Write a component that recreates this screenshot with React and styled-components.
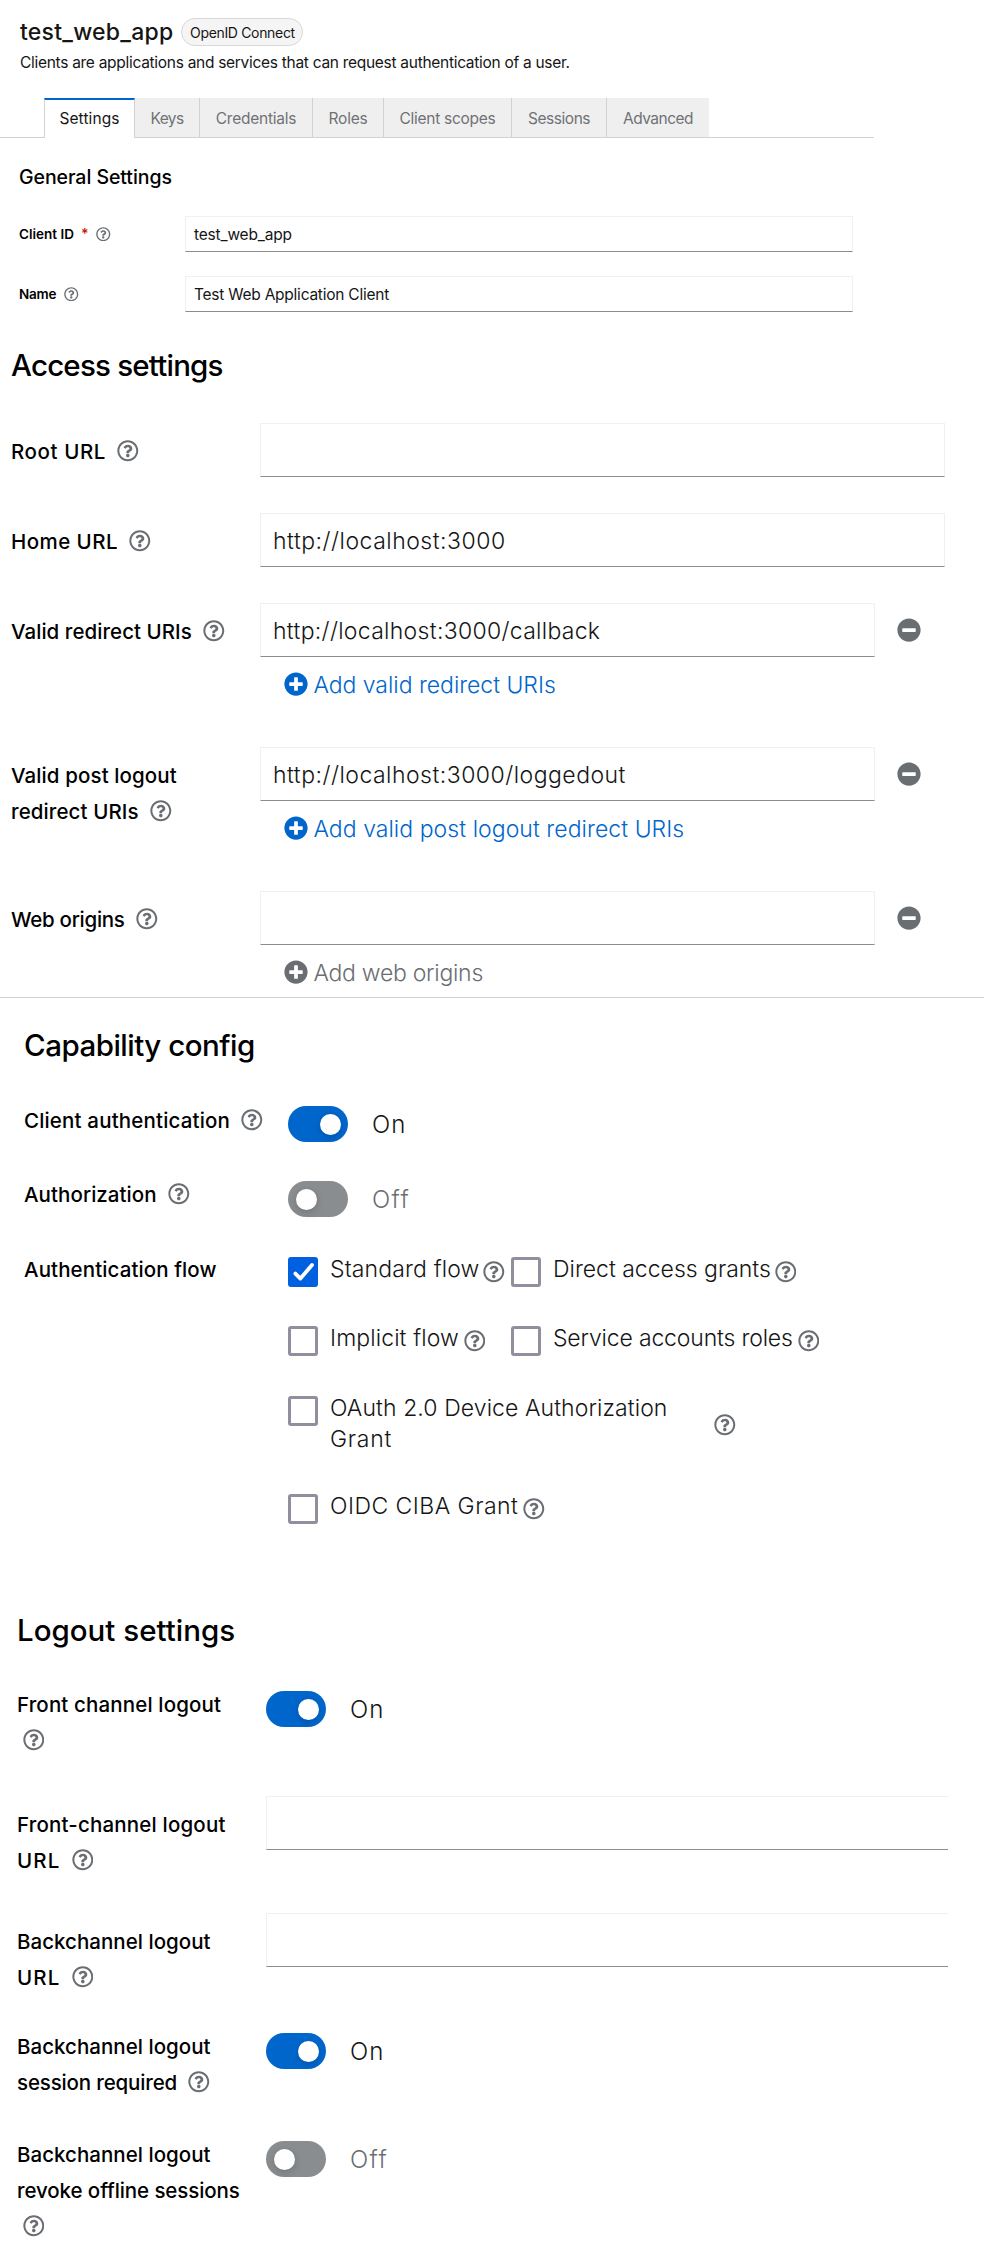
import React from "react";
import styled, { createGlobalStyle, css } from "styled-components";
import { FaRegQuestionCircle, FaPlusCircle, FaMinusCircle } from "react-icons/fa";

const GlobalStyle = createGlobalStyle`
  *, *::before, *::after { box-sizing: border-box; }
  body {
    margin: 0;
    background: #fff;
    color: #151515;
    font-family: Inter, "Liberation Sans", sans-serif;
  }
`;

const Page = styled.main`
  width: 984px;
  height: 2260px;
  overflow: hidden;
  background: #fff;
`;

/* Spacing is tuned per string through $ls */
const Txt = styled.span`
  letter-spacing: ${(p) => p.$ls || 0}px;
  white-space: nowrap;
`;

/* ---------- header ---------- */
const Header = styled.header`
  padding: 18px 20px 0;
`;
const TitleRow = styled.div`
  display: flex;
  align-items: center;
  gap: 8px;
  height: 28px;
`;
const Title = styled.h1`
  margin: 0;
  font-size: 23px;
  line-height: 28px;
  font-weight: 500;
`;
const Pill = styled.span`
  display: flex;
  align-items: center;
  justify-content: center;
  width: 122px;
  height: 28px;
  border: 1px solid #d8d8d8;
  border-radius: 14px;
  background: #f5f5f5;
  font-size: 14px;
`;
const Description = styled.p`
  margin: 5px 0 0;
  font-size: 15.5px;
  line-height: 24px;
`;

/* ---------- tabs ---------- */
const Tabs = styled.nav`
  display: flex;
  width: 874px;
  height: 40px;
  margin-top: 23px;
  padding-left: 44px;
  border-bottom: 1px solid #d2d2d2;
`;
const Tab = styled.div`
  display: flex;
  align-items: center;
  justify-content: center;
  width: ${(p) => p.$w}px;
  height: 39px;
  padding-top: 2px;
  border-right: 1px solid #d2d2d2;
  background: #efefef;
  color: #6f7276;
  font-size: 15.5px;
  &:last-child { border-right: 0; }
  ${(p) =>
    p.$active &&
    css`
      height: 40px;
      padding-top: 0;
      padding-bottom: 1px;
      border-left: 1px solid #d2d2d2;
      border-top: 2px solid #0066cc;
      background: #fff;
      color: #151515;
    `}
`;

/* ---------- form parts ---------- */
const Section = styled.section`
  padding-top: ${(p) => p.$top}px;
  padding-left: ${(p) => p.$left}px;
`;
const Heading = styled.h2`
  margin: 0 0 ${(p) => p.$gap}px;
  color: #000;
  font-weight: 500;
  font-size: 29.5px;
  line-height: 40px;
`;
const SmallHeading = styled(Heading)`
  font-size: 19.5px;
  line-height: 26px;
`;
const Row = styled.div`
  display: grid;
  grid-template-columns: ${(p) => p.$label}px 1fr;
  align-items: start;
  height: ${(p) => p.$h}px;
`;
const Label = styled.div`
  padding-top: ${(p) => p.$top || 0}px;
  margin-top: ${(p) => (p.$raised ? -1 : 0)}px;
  color: #000;
  font-size: ${(p) => (p.$small ? 13.5 : 20.5)}px;
  font-weight: ${(p) => (p.$small ? 600 : 500)};
`;
const LabelLine = styled.div`
  display: flex;
  align-items: center;
  height: 36px;
`;
const Help = styled(FaRegQuestionCircle)`
  flex: none;
  width: ${(p) => p.$size || 21.6}px;
  height: ${(p) => p.$size || 21.6}px;
  margin-left: ${(p) => p.$ml ?? 11.3}px;
  color: #6a6e73;
`;
const Required = styled.span`
  margin-left: 7px;
  color: #c9190b;
  font-size: 14px;
  line-height: 14px;
`;
const Field = styled.div`
  display: flex;
  align-items: center;
  width: ${(p) => p.$w}px;
  height: ${(p) => (p.$small ? 36 : 54)}px;
  padding-top: ${(p) => (p.$small ? 0 : 2)}px;
  padding-left: ${(p) => (p.$small ? 8 : 12)}px;
  border: 1px solid #f0f0f0;
  border-bottom-color: #8a8d90;
  ${(p) => p.$open && "border-right: 0;"}
  font-size: ${(p) => (p.$small ? 15.5 : 23)}px;
  font-weight: ${(p) => (p.$small ? 400 : 300)};
`;
const FieldLine = styled.div`
  display: flex;
  align-items: center;
  gap: 22px;
`;
const Remove = styled(FaMinusCircle)`
  width: 24px;
  height: 24px;
  color: #6a6e73;
`;
const AddLink = styled.div`
  display: flex;
  align-items: center;
  gap: 5.4px;
  height: 54px;
  padding-left: 24px;
  color: ${(p) => (p.$muted ? "#6a6e73" : "#0066cc")};
  font-size: 23px;
  font-weight: 300;
  svg { width: 24px; height: 24px; }
  span { padding-top: 2px; }
`;
const Divider = styled.hr`
  margin: 0;
  border: 0;
  border-top: 1px solid #d2d2d2;
`;

const SwitchRow = styled.div`
  display: flex;
  align-items: center;
  gap: 24px;
  height: 36px;
  margin-top: 4px;
  color: ${(p) => (p.$on ? "#151515" : "#6a6e73")};
  font-size: 24px;
  font-weight: 300;
`;
const Track = styled.span`
  display: flex;
  align-items: center;
  justify-content: ${(p) => (p.$on ? "flex-end" : "flex-start")};
  width: 60px;
  height: 36px;
  padding: 0 7px 0 8px;
  border-radius: 18px;
  background: ${(p) => (p.$on ? "#0066cc" : "#8a8d90")};
`;
const Knob = styled.span`
  width: 21px;
  height: 21px;
  border-radius: 50%;
  background: #fff;
  box-shadow: 0 4px 8px rgba(3, 3, 3, 0.12), 0 0 4px rgba(3, 3, 3, 0.06);
`;

/* ---------- flow checkboxes ---------- */
const FlowGrid = styled.div`
  display: grid;
  grid-template-columns: 223px 1fr;
  grid-template-rows: 69px 70px 98px 60px;
  padding-top: 1px;
`;
const FlowItem = styled.div`
  display: flex;
  align-items: flex-start;
  grid-column: ${(p) => (p.$wide ? "1 / -1" : "auto")};
  font-size: 23px;
  font-weight: 300;
  line-height: 31px;
`;
const FlowText = styled.div`
  margin-left: 12px;
  padding-top: 1px;
  width: ${(p) => (p.$w ? `${p.$w}px` : "auto")};
  white-space: nowrap;
`;
const FlowHelp = styled(Help)`
  margin-top: ${(p) => p.$mt || 8}px;
`;
const Box = styled.span`
  flex: none;
  display: block;
  width: 30px;
  height: 30px;
  margin-top: 4px;
  border: ${(p) => (p.$checked ? "0" : "3px solid #8f8f9d")};
  border-radius: 3px;
  background: ${(p) => (p.$checked ? "#0060df" : "#fff")};
  svg { display: block; }
`;

function Check({ checked }) {
  return (
    <Box $checked={checked}>
      {checked && (
        <svg width="30" height="30" viewBox="0 0 30 30" fill="none">
          <path d="M7.4 16.6 L12.4 21.6 L24 8" stroke="#fff" strokeWidth="3.8" strokeLinecap="round" strokeLinejoin="round" />
        </svg>
      )}
    </Box>
  );
}

function FormLabel({ lines, top, raised, help = true, wrapHelp }) {
  return (
    <Label $top={top} $raised={raised}>
      {lines.map(([text, ls], i) => (
        <LabelLine key={text}>
          <Txt $ls={ls}>{text}</Txt>
          {help && !wrapHelp && i === lines.length - 1 && <Help />}
        </LabelLine>
      ))}
      {wrapHelp && (
        <LabelLine>
          <Help $ml={5.7} />
        </LabelLine>
      )}
    </Label>
  );
}

function Switch({ on }) {
  return (
    <SwitchRow $on={on}>
      <Track $on={on}>
        <Knob />
      </Track>
      <Txt $ls={on ? 1 : 1.3}>{on ? "On" : "Off"}</Txt>
    </SwitchRow>
  );
}

const tabs = [
  ["Settings", 91, 0.1],
  ["Keys", 65, -0.6],
  ["Credentials", 113, -0.24],
  ["Roles", 71, -0.21],
  ["Client scopes", 128, -0.28],
  ["Sessions", 95, -0.44],
  ["Advanced", 102, -0.52],
];

const accessRows = [
  { h: 90, label: [["Root URL", 0.6]] },
  { h: 90, label: [["Home URL", 0.45]], value: ["http://localhost:3000", 0.5] },
  { h: 144, label: [["Valid redirect URIs", 0.05]], value: ["http://localhost:3000/callback", 0.3], add: ["Add valid redirect URIs", -0.03] },
  {
    h: 144,
    label: [["Valid post logout", 0.11], ["redirect URIs", 0.1]],
    value: ["http://localhost:3000/loggedout", 0.48],
    add: ["Add valid post logout redirect URIs", 0.05],
  },
  { h: 106, label: [["Web origins", -0.28]], add: ["Add web origins", -0.27], muted: true },
];

const logoutRows = [
  { h: 109, label: [["Front channel logout", 0.14]], on: true, wrapHelp: true },
  { h: 117, label: [["Front-channel logout", 0.18], ["URL", 1.1]] },
  { h: 116, label: [["Backchannel logout", 0.03], ["URL", 1.1]] },
  { h: 108, label: [["Backchannel logout", 0.03], ["session required", -0.15]], on: true },
  { h: 123, label: [["Backchannel logout", 0.03], ["revoke offline sessions", -0.09]], on: false, wrapHelp: true },
];

export default function App() {
  return (
    <Page>
      <GlobalStyle />
      <Header>
        <TitleRow>
          <Title><Txt $ls={0.24}>test_web_app</Txt></Title>
          <Pill><Txt $ls={-0.33}>OpenID Connect</Txt></Pill>
        </TitleRow>
        <Description>
          <Txt $ls={-0.29}>Clients are applications and services that can request authentication of a user.</Txt>
        </Description>
      </Header>

      <Tabs>
        {tabs.map(([name, w, ls], i) => (
          <Tab key={name} $w={w} $active={i === 0}><Txt $ls={ls}>{name}</Txt></Tab>
        ))}
      </Tabs>

      <Section $top={26} $left={19}>
        <SmallHeading $gap={26}><Txt $ls={-0.06}>General Settings</Txt></SmallHeading>
        <Row $label={166} $h={60}>
          <Label $small>
            <LabelLine>
              <Txt>Client ID</Txt>
              <Required>*</Required>
              <Help $size={14.5} $ml={8} />
            </LabelLine>
          </Label>
          <Field $small $w={668}><Txt $ls={-0.18}>test_web_app</Txt></Field>
        </Row>
        <Row $label={166} $h={36}>
          <Label $small>
            <LabelLine>
              <Txt $ls={-0.22}>Name</Txt>
              <Help $size={14.5} $ml={8} />
            </LabelLine>
          </Label>
          <Field $small $w={668}><Txt $ls={-0.24}>Test Web Application Client</Txt></Field>
        </Row>
      </Section>

      <Section $top={33} $left={11}>
        <Heading $gap={38}><Txt $ls={-0.79}>Access settings</Txt></Heading>
        {accessRows.map((row) => (
          <Row key={row.label[0][0]} $label={249} $h={row.h}>
            <FormLabel lines={row.label} top={10} />
            <div>
              <FieldLine>
                <Field $w={row.add ? 615 : 685}>
                  {row.value && <Txt $ls={row.value[1]}>{row.value[0]}</Txt>}
                </Field>
                {row.add && <Remove />}
              </FieldLine>
              {row.add && (
                <AddLink $muted={row.muted}>
                  <FaPlusCircle />
                  <Txt $ls={row.add[1]}>{row.add[0]}</Txt>
                </AddLink>
              )}
            </div>
          </Row>
        ))}
      </Section>
      <Divider />

      <Section $top={27} $left={24}>
        <Heading $gap={37}><Txt $ls={-0.5}>Capability config</Txt></Heading>
        <Row $label={264} $h={75}>
          <FormLabel lines={[["Client authentication", 0.17]]} />
          <Switch on />
        </Row>
        <Row $label={264} $h={75}>
          <FormLabel raised lines={[["Authorization", 0.06]]} />
          <Switch on={false} />
        </Row>
        <Row $label={264} $h={358}>
          <FormLabel raised lines={[["Authentication flow", 0.1]]} help={false} />
          <FlowGrid>
            <FlowItem>
              <Check checked />
              <FlowText><Txt $ls={0.14}>Standard flow</Txt></FlowText>
              <FlowHelp $ml={4} />
            </FlowItem>
            <FlowItem>
              <Check />
              <FlowText><Txt $ls={-0.01}>Direct access grants</Txt></FlowText>
              <FlowHelp $ml={4} />
            </FlowItem>
            <FlowItem>
              <Check />
              <FlowText><Txt $ls={0.1}>Implicit flow</Txt></FlowText>
              <FlowHelp $ml={5} />
            </FlowItem>
            <FlowItem>
              <Check />
              <FlowText><Txt $ls={-0.17}>Service accounts roles</Txt></FlowText>
              <FlowHelp $ml={5} />
            </FlowItem>
            <FlowItem $wide>
              <Check />
              <FlowText $w={378}>
                <Txt $ls={0.08}>OAuth 2.0 Device Authorization</Txt>
                <br />
                <Txt $ls={0.74}>Grant</Txt>
              </FlowText>
              <FlowHelp $ml={6} $mt={22} />
            </FlowItem>
            <FlowItem $wide>
              <Check />
              <FlowText><Txt $ls={0.47}>OIDC CIBA Grant</Txt></FlowText>
              <FlowHelp $ml={5} />
            </FlowItem>
          </FlowGrid>
        </Row>
      </Section>

      <Section $top={0} $left={17}>
        <Heading $gap={37}><Txt $ls={0}>Logout settings</Txt></Heading>
        {logoutRows.map((row, i) => (
          <Row key={i} $label={249} $h={row.h}>
            <FormLabel
              lines={row.label}
              top={row.on === undefined ? 10 : 0}
              raised={row.on !== undefined}
              wrapHelp={row.wrapHelp}
            />
            {row.on === undefined ? <Field $w={682} $open /> : <Switch on={row.on} />}
          </Row>
        ))}
      </Section>
    </Page>
  );
}
